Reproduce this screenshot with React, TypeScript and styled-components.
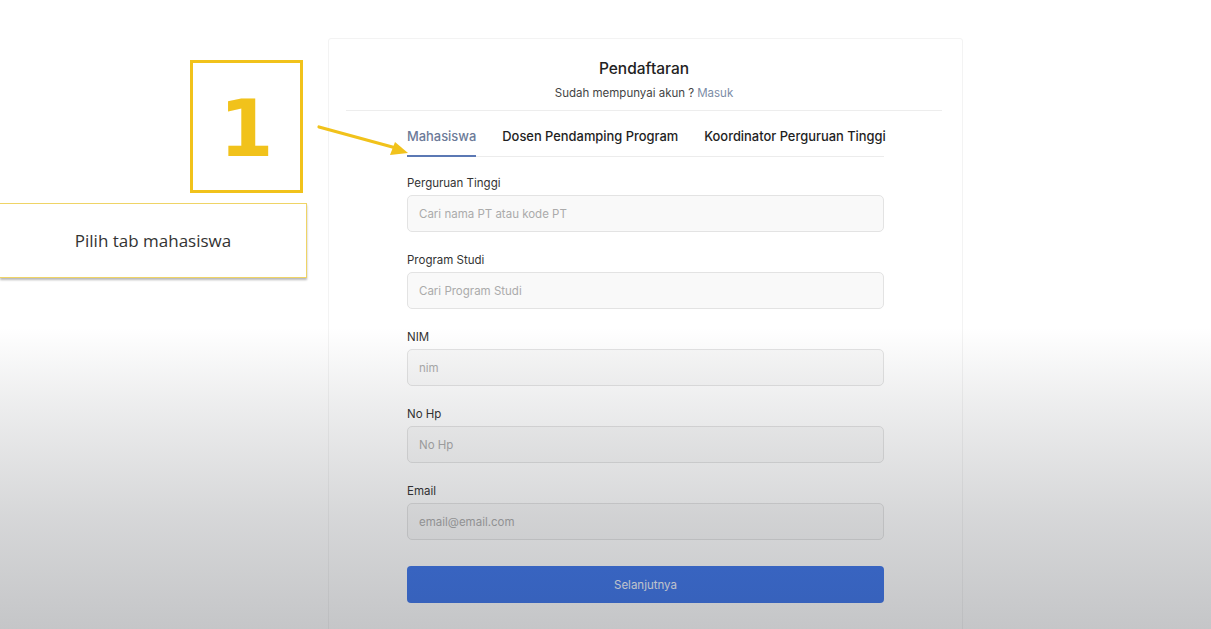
import React from "react";
import styled, { createGlobalStyle } from "styled-components";

const GlobalStyle = createGlobalStyle`
  html, body {
    margin: 0;
    padding: 0;
    background: #ffffff;
  }
  body {
    font-family: Inter, "Liberation Sans", sans-serif;
    color: #222;
  }
`;

const Page = styled.div`
  position: relative;
  display: flex;
  width: 100%;
  height: 100vh;
  overflow: hidden;
  background: #ffffff;
`;

const Notes = styled.div`
  width: 328px;
  flex-shrink: 0;
  padding-top: 60px;
  box-sizing: border-box;
`;

const StepBox = styled.div`
  width: 113px;
  height: 133px;
  margin-left: 190px;
  box-sizing: border-box;
  border: 3px solid #f1c21b;
  display: flex;
  align-items: center;
  justify-content: center;
  font-family: "DejaVu Sans", sans-serif;
  font-weight: 700;
  font-size: 78px;
  color: #f1c21b;
  line-height: 1;
  padding-top: 4px;
`;

const Callout = styled.div`
  width: 307px;
  height: 75px;
  margin-top: 10px;
  box-sizing: border-box;
  background: #ffffff;
  border: 1px solid #efd466;
  border-left: none;
  box-shadow: 0 2px 2px rgba(0, 0, 0, 0.28);
  display: flex;
  align-items: center;
  justify-content: center;
  font-family: "Open Sans", sans-serif;
  font-size: 17px;
  color: #333;
`;

const Arrow = styled.svg`
  position: absolute;
  left: 316px;
  top: 120px;
`;

const Card = styled.div`
  width: 635px;
  margin-top: 38px;
  height: 640px;
  box-sizing: border-box;
  border: 1px solid #f3f3f3;
  border-radius: 3px;
  background: #ffffff;
  flex-shrink: 0;
`;

const Header = styled.div`
  height: 72px;
  margin: 0 20px 0 17px;
  border-bottom: 1px solid #ededed;
  display: flex;
  flex-direction: column;
  align-items: center;
  padding-top: 20px;
  box-sizing: border-box;
`;

const Title = styled.div`
  font-size: 15.5px;
  font-weight: 500;
  color: #222;
  line-height: 19px;
`;

const Sub = styled.div`
  margin-top: 8px;
  font-size: 11.5px;
  color: #444;
  line-height: 14px;
  span {
    color: #7b8ca6;
    margin-left: 3px;
  }
`;

const Form = styled.div`
  width: 477px;
  margin-left: 78px;
`;

const Tabs = styled.div`
  display: flex;
  gap: 26px;
  margin-top: 12px;
  border-bottom: 1px solid #ececec;
`;

const Tab = styled.div<{ $active?: boolean }>`
  padding: 6px 0 10px;
  font-size: 12.9px;
  font-weight: 500;
  line-height: 16px;
  white-space: nowrap;
  color: ${(p) => (p.$active ? "#6c7a98" : "#1f1f1f")};
  border-bottom: 2px solid ${(p) => (p.$active ? "#5b78b4" : "transparent")};
  margin-bottom: -1px;
`;

const Fields = styled.div`
  display: flex;
  flex-direction: column;
  gap: 21px;
  margin-top: 19px;
`;

const Field = styled.div`
  display: flex;
  flex-direction: column;
  gap: 4px;
`;

const Label = styled.label`
  font-size: 11.5px;
  line-height: 15px;
  color: #333;
`;

const Input = styled.input`
  height: 37px;
  box-sizing: border-box;
  border: 1px solid #e3e3e3;
  border-radius: 5px;
  background: #f9f9f9;
  padding: 0 11px;
  font-family: Inter, "Liberation Sans", sans-serif;
  font-size: 11.5px;
  color: #333;
  outline: none;
  &::placeholder {
    color: #ababab;
  }
`;

const Submit = styled.button`
  margin-top: 26px;
  width: 100%;
  height: 37px;
  border: none;
  border-radius: 4px;
  background: #3f76ea;
  color: #eef2fb;
  font-family: Inter, "Liberation Sans", sans-serif;
  font-size: 11.5px;
`;

const Fade = styled.div`
  position: absolute;
  inset: 0;
  pointer-events: none;
  background: linear-gradient(
    to bottom,
    rgba(30, 34, 42, 0) 0%,
    rgba(30, 34, 42, 0) 52%,
    rgba(30, 34, 42, 0.08) 64%,
    rgba(30, 34, 42, 0.18) 82%,
    rgba(30, 34, 42, 0.26) 100%
  );
`;

const fields = [
  { label: "Perguruan Tinggi", placeholder: "Cari nama PT atau kode PT" },
  { label: "Program Studi", placeholder: "Cari Program Studi" },
  { label: "NIM", placeholder: "nim" },
  { label: "No Hp", placeholder: "No Hp" },
  { label: "Email", placeholder: "email@email.com" },
];

export default function App() {
  return (
    <Page>
      <GlobalStyle />
      <Notes>
        <StepBox>1</StepBox>
        <Callout>Pilih tab mahasiswa</Callout>
      </Notes>

      <Card>
        <Header>
          <Title>Pendaftaran</Title>
          <Sub>
            Sudah mempunyai akun ?<span>Masuk</span>
          </Sub>
        </Header>
        <Form>
          <Tabs>
            <Tab $active>Mahasiswa</Tab>
            <Tab>Dosen Pendamping Program</Tab>
            <Tab>Koordinator Perguruan Tinggi</Tab>
          </Tabs>
          <Fields>
            {fields.map((f) => (
              <Field key={f.label}>
                <Label>{f.label}</Label>
                <Input placeholder={f.placeholder} />
              </Field>
            ))}
          </Fields>
          <Submit>Selanjutnya</Submit>
        </Form>
      </Card>

      <Arrow width="100" height="40" viewBox="0 0 100 40">
        <line x1="3" y1="7" x2="80" y2="28" stroke="#f1c21b" strokeWidth="3.2" strokeLinecap="round" />
        <polygon points="92,33 74,35 79,22" fill="#f1c21b" />
      </Arrow>
      <Fade />
    </Page>
  );
}
